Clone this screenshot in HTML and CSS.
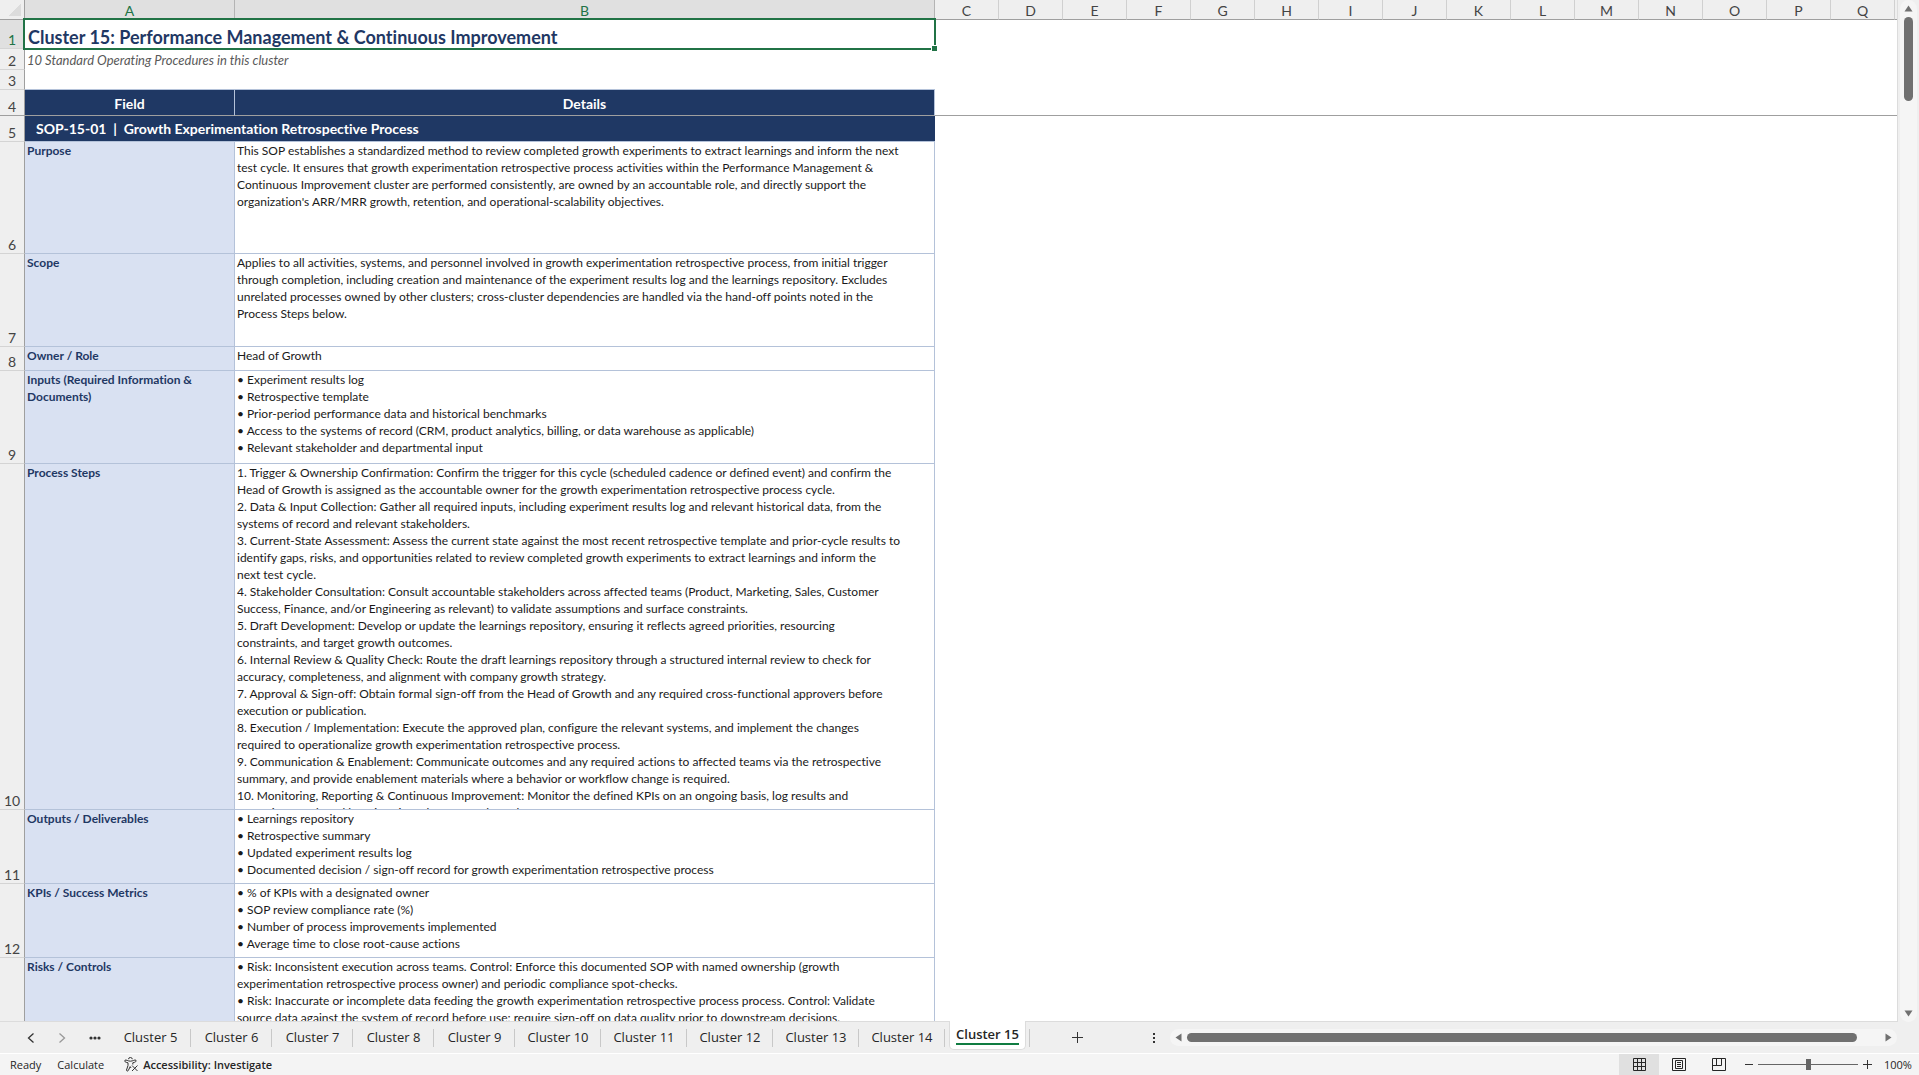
FILE: index.html
```
<!DOCTYPE html>
<html lang="en">
<head>
    <meta charset="utf-8">
    <title>Cluster 15</title>
    <link rel="stylesheet" href="styles.css">
</head>
<body>
    <main class="workspace">
        <div class="sheet">
            <table class="grid">
                <colgroup>
                    <col class="col-num">
                    <col class="col-a">
                    <col class="col-b">
                    <col class="col-std" span="15">
                    <col>
                </colgroup>
                <thead>
                    <tr class="letters">
                        <th class="corner"></th>
                        <th class="active">A</th>
                        <th class="active">B</th>
                        <th>C</th>
                        <th>D</th>
                        <th>E</th>
                        <th>F</th>
                        <th>G</th>
                        <th>H</th>
                        <th>I</th>
                        <th>J</th>
                        <th>K</th>
                        <th>L</th>
                        <th>M</th>
                        <th>N</th>
                        <th>O</th>
                        <th>P</th>
                        <th>Q</th>
                        <th></th>
                    </tr>
                </thead>
                <tbody>
                    <tr class="row-1">
                        <th class="num active">1</th>
                        <td class="title" colspan="2">Cluster 15: Performance Management &amp; Continuous Improvement<span class="handle"></span></td>
                        <td colspan="16"></td>
                    </tr>
                    <tr class="row-2">
                        <th class="num">2</th>
                        <td class="subtitle" colspan="2">10 Standard Operating Procedures in this cluster</td>
                        <td colspan="16"></td>
                    </tr>
                    <tr class="row-3">
                        <th class="num">3</th>
                        <td class="edge" colspan="2"></td>
                        <td colspan="16"></td>
                    </tr>
                    <tr class="row-4 frozen">
                        <th class="num">4</th>
                        <td class="head">Field</td>
                        <td class="head">Details</td>
                        <td colspan="16"></td>
                    </tr>
                    <tr class="row-5">
                        <th class="num">5</th>
                        <td class="section" colspan="2">SOP-15-01&nbsp; |&nbsp; Growth Experimentation Retrospective Process</td>
                        <td colspan="16"></td>
                    </tr>
                    <tr class="row-6">
                        <th class="num">6</th>
                        <td class="field">Purpose</td>
                        <td class="details">This SOP establishes a standardized method to review completed growth experiments to extract learnings and inform the next<br>
                            test cycle. It ensures that growth experimentation retrospective process activities within the Performance Management &amp;<br>
                            Continuous Improvement cluster are performed consistently, are owned by an accountable role, and directly support the<br>
                            organization's ARR/MRR growth, retention, and operational-scalability objectives.</td>
                        <td colspan="16"></td>
                    </tr>
                    <tr class="row-7">
                        <th class="num">7</th>
                        <td class="field">Scope</td>
                        <td class="details">Applies to all activities, systems, and personnel involved in growth experimentation retrospective process, from initial trigger<br>
                            through completion, including creation and maintenance of the experiment results log and the learnings repository. Excludes<br>
                            unrelated processes owned by other clusters; cross-cluster dependencies are handled via the hand-off points noted in the<br>
                            Process Steps below.</td>
                        <td colspan="16"></td>
                    </tr>
                    <tr class="row-8">
                        <th class="num">8</th>
                        <td class="field">Owner / Role</td>
                        <td class="details">Head of Growth</td>
                        <td colspan="16"></td>
                    </tr>
                    <tr class="row-9">
                        <th class="num">9</th>
                        <td class="field">Inputs (Required Information &amp;<br>Documents)</td>
                        <td class="details">• Experiment results log<br>
                            • Retrospective template<br>
                            • Prior-period performance data and historical benchmarks<br>
                            • Access to the systems of record (CRM, product analytics, billing, or data warehouse as applicable)<br>
                            • Relevant stakeholder and departmental input</td>
                        <td colspan="16"></td>
                    </tr>
                    <tr class="row-10">
                        <th class="num">10</th>
                        <td class="field">Process Steps</td>
                        <td class="details"><div class="clip">1. Trigger &amp; Ownership Confirmation: Confirm the trigger for this cycle (scheduled cadence or defined event) and confirm the<br>
                            Head of Growth is assigned as the accountable owner for the growth experimentation retrospective process cycle.<br>
                            2. Data &amp; Input Collection: Gather all required inputs, including experiment results log and relevant historical data, from the<br>
                            systems of record and relevant stakeholders.<br>
                            3. Current-State Assessment: Assess the current state against the most recent retrospective template and prior-cycle results to<br>
                            identify gaps, risks, and opportunities related to review completed growth experiments to extract learnings and inform the<br>
                            next test cycle.<br>
                            4. Stakeholder Consultation: Consult accountable stakeholders across affected teams (Product, Marketing, Sales, Customer<br>
                            Success, Finance, and/or Engineering as relevant) to validate assumptions and surface constraints.<br>
                            5. Draft Development: Develop or update the learnings repository, ensuring it reflects agreed priorities, resourcing<br>
                            constraints, and target growth outcomes.<br>
                            6. Internal Review &amp; Quality Check: Route the draft learnings repository through a structured internal review to check for<br>
                            accuracy, completeness, and alignment with company growth strategy.<br>
                            7. Approval &amp; Sign-off: Obtain formal sign-off from the Head of Growth and any required cross-functional approvers before<br>
                            execution or publication.<br>
                            8. Execution / Implementation: Execute the approved plan, configure the relevant systems, and implement the changes<br>
                            required to operationalize growth experimentation retrospective process.<br>
                            9. Communication &amp; Enablement: Communicate outcomes and any required actions to affected teams via the retrospective<br>
                            summary, and provide enablement materials where a behavior or workflow change is required.<br>
                            10. Monitoring, Reporting &amp; Continuous Improvement: Monitor the defined KPIs on an ongoing basis, log results and<br>
                            exceptions, and feed learnings into the next cycle of the process.</div></td>
                        <td colspan="16"></td>
                    </tr>
                    <tr class="row-11">
                        <th class="num">11</th>
                        <td class="field">Outputs / Deliverables</td>
                        <td class="details">• Learnings repository<br>
                            • Retrospective summary<br>
                            • Updated experiment results log<br>
                            • Documented decision / sign-off record for growth experimentation retrospective process</td>
                        <td colspan="16"></td>
                    </tr>
                    <tr class="row-12">
                        <th class="num">12</th>
                        <td class="field">KPIs / Success Metrics</td>
                        <td class="details">• % of KPIs with a designated owner<br>
                            • SOP review compliance rate (%)<br>
                            • Number of process improvements implemented<br>
                            • Average time to close root-cause actions</td>
                        <td colspan="16"></td>
                    </tr>
                    <tr class="row-13">
                        <th class="num"></th>
                        <td class="field">Risks / Controls</td>
                        <td class="details">• Risk: Inconsistent execution across teams. Control: Enforce this documented SOP with named ownership (growth<br>
                            experimentation retrospective process owner) and periodic compliance spot-checks.<br>
                            • Risk: Inaccurate or incomplete data feeding the growth experimentation retrospective process process. Control: Validate<br>
                            source data against the system of record before use; require sign-off on data quality prior to downstream decisions.</td>
                        <td colspan="16"></td>
                    </tr>
                </tbody>
            </table>
        </div>
        <div class="vscroll">
            <button class="arrow" aria-label="Scroll up"><svg width="9" height="7"><path d="M4.5 0.5L8.5 6.5H0.5Z"/></svg></button>
            <div class="vthumb"></div>
            <button class="arrow" aria-label="Scroll down"><svg width="9" height="7"><path d="M4.5 6.5L8.5 0.5H0.5Z"/></svg></button>
        </div>
    </main>

    <nav class="tabbar">
        <div class="tabnav">
            <button aria-label="Previous sheet"><svg width="8" height="10"><path d="M6.5 0.5L1.5 5L6.5 9.5"/></svg></button>
            <button class="dim" aria-label="Next sheet"><svg width="8" height="10"><path d="M1.5 0.5L6.5 5L1.5 9.5"/></svg></button>
            <button aria-label="More sheets"><svg class="dots" width="12" height="4"><circle cx="2" cy="2" r="1.6"/><circle cx="6" cy="2" r="1.6"/><circle cx="10" cy="2" r="1.6"/></svg></button>
        </div>
        <div class="tabs">
            <button class="tab">Cluster 5</button>
            <button class="tab">Cluster 6</button>
            <button class="tab">Cluster 7</button>
            <button class="tab">Cluster 8</button>
            <button class="tab">Cluster 9</button>
            <button class="tab wide">Cluster 10</button>
            <button class="tab wide">Cluster 11</button>
            <button class="tab wide">Cluster 12</button>
            <button class="tab wide">Cluster 13</button>
            <button class="tab wide">Cluster 14</button>
            <button class="tab current"><span>Cluster 15</span></button>
        </div>
        <button class="add" aria-label="New sheet"><svg width="11" height="11"><path d="M5.5 0V11M0 5.5H11"/></svg></button>
        <div class="splitter"><svg width="2" height="10"><path d="M0 0H2V2H0ZM0 4H2V6H0ZM0 8H2V10H0Z"/></svg></div>
        <div class="hscroll">
            <button class="arrow" aria-label="Scroll left"><svg width="7" height="9"><path d="M0.5 4.5L6.5 0.5V8.5Z"/></svg></button>
            <div class="hthumb"></div>
            <button class="arrow" aria-label="Scroll right"><svg width="7" height="9"><path d="M6.5 4.5L0.5 0.5V8.5Z"/></svg></button>
        </div>
    </nav>

    <footer class="status">
        <span class="ready">Ready</span>
        <button class="calc">Calculate</button>
        <button class="access">
            <svg width="15" height="15" viewBox="0 0 15 15"><path d="M4.5 2.2a1.9 1.7 0 0 1 3.8 0M1 3.2C0.2 4.6 1.2 5.2 4 5.8V8.5L2.5 13C2.6 14.4 4 14.4 4.4 13.3L6.2 9.6L7 11M1 3.2C2 2.4 4 4.2 6.4 4.2S11 2.3 11.9 3.2C12.6 4.6 11.4 5.2 8.8 5.8V7.5M8 8.5L13.5 14M13.5 8.5L8 14"/></svg>
            Accessibility: Investigate
        </button>
        <div class="views">
            <button class="on" aria-label="Normal"><svg width="13" height="13"><path d="M0.5 0.5H12.5V12.5H0.5ZM4.5 0V13M8.5 0V13M0 4.5H13M0 8.5H13"/></svg></button>
            <button aria-label="Page Layout"><svg width="14" height="13"><path d="M0.5 0.5H13.5V12.5H0.5ZM3.5 2.5H10.5V10.5H3.5ZM5 4.5H9M5 6.5H9M5 8.5H9"/></svg></button>
            <button aria-label="Page Break Preview"><svg width="14" height="13"><path d="M0.5 0.5H13.5V12.5H0.5ZM4.5 0V7.5M9.5 0V7.5M0 7.5H9.5"/></svg></button>
        </div>
        <div class="zoom">
            <button aria-label="Zoom out"><svg width="8" height="9"><path d="M0 4.5H8"/></svg></button>
            <input type="range" min="0" max="100" value="50" aria-label="Zoom">
            <button aria-label="Zoom in"><svg width="9" height="9"><path d="M0 4.5H9M4.5 0V9"/></svg></button>
            <button class="percent">100%</button>
        </div>
    </footer>
</body>
</html>
```
FILE: styles.css
```
* {
    box-sizing: border-box;
}
body {
    margin: 0;
    height: 100vh;
    display: flex;
    flex-direction: column;
    overflow: hidden;
    background-color: #efefef;
    font-family: "Open Sans", "Noto Sans", sans-serif;
    color: #262626;
}
button {
    border: 0;
    padding: 0;
    background: none;
    font: inherit;
    color: inherit;
}
svg {
    display: block;
}

/* worksheet */
.workspace {
    flex: 1;
    min-height: 0;
    display: flex;
}
.sheet {
    flex: 1;
    min-width: 0;
    overflow: hidden;
    background-color: white;
    border-right: 1px solid #dcdcdc;
    border-bottom: 1px solid #dcdcdc;
}
.grid {
    width: 100%;
    table-layout: fixed;
    border-collapse: separate;
    border-spacing: 0;
    font-family: Lato, "Open Sans", sans-serif;
    font-size: 12px;
    font-variant-ligatures: none;
    line-height: 17px;
}
.col-num { width: 25px; }
.col-a { width: 210px; }
.col-b { width: 700px; }
.col-std { width: 64px; }

th, td {
    padding: 0;
    white-space: nowrap;
}
.letters { height: 20px; }
.letters th {
    padding-top: 1px;
    background: #efefef;
    border-right: 1px solid #d0d0d0;
    border-bottom: 1px solid #9f9f9f;
    font-size: 14px;
    font-weight: normal;
    color: #444;
}
.letters th:last-child {
    border-right: 0;
}
.letters .active {
    background: #e0e0e0;
    border-right-color: #b4b4b4;
    color: #217346;
}
.letters .corner {
    background: linear-gradient(135deg, #efefef 50%, #dcdcdc 50%) no-repeat 9px 4px / 12px 12px #efefef;
    border-right-color: #9f9f9f;
}
.num {
    background: #efefef;
    border-right: 1px solid #9f9f9f;
    border-bottom: 1px solid #d4d4d4;
    vertical-align: bottom;
    font-size: 14px;
    font-weight: normal;
    color: #444;
}
.num.active {
    background: #e0e0e0;
    color: #217346;
}
.row-1 { height: 29px; }
.row-2 { height: 21px; }
.row-3 { height: 20px; }
.row-4, .row-5 { height: 26px; }
.row-6 { height: 112px; }
.row-7, .row-9 { height: 93px; }
.row-8 { height: 24px; }
.row-10 { height: 346px; }
.row-11, .row-12 { height: 74px; }
.row-13 { height: 112px; }

.title {
    position: relative;
    padding: 5px 3px 0;
    font-size: 18px;
    line-height: 22px;
    font-weight: bold;
    color: #1f3864;
}
/* selection frame */
.title::after {
    content: "";
    position: absolute;
    top: -2px;
    right: -1px;
    bottom: -1px;
    left: -2px;
    border: 2px solid #217346;
}
.handle {
    position: absolute;
    right: -3px;
    bottom: -3px;
    z-index: 1;
    width: 7px;
    height: 7px;
    background: #217346;
    border: 1px solid white;
}
.subtitle {
    padding: 2px 2px 0;
    font-size: 13px;
    font-style: italic;
    color: #595959;
}
.edge {
    border-bottom: 1px solid #b4c2d9;
}
.head {
    padding-top: 2px;
    background: #1f3864;
    border-right: 1px solid #b4c2d9;
    text-align: center;
    font-size: 14px;
    font-weight: bold;
    color: white;
}
.frozen th, .frozen td {
    border-bottom: 1px solid #9f9f9f;
}
.section {
    padding-left: 11px;
    background: #1f3864;
    border-bottom: 1px solid #b4c2d9;
    font-size: 14px;
    font-weight: bold;
    color: white;
}
.field, .details {
    padding: 0 2px;
    vertical-align: top;
    border-right: 1px solid #b4c2d9;
    border-bottom: 1px solid #b4c2d9;
}
.field {
    background: #d9e1f2;
    font-weight: bold;
    color: #1f3864;
}
.details {
    color: #1a1a1a;
}
.clip {
    height: 345px;
    overflow: hidden;
}

/* scrollbars */
.vscroll {
    width: 17px;
    margin: 0 2px;
    padding: 5px 0;
    display: flex;
    flex-direction: column;
    align-items: center;
    background: #f5f5f5;
    border-radius: 9px;
}
.vthumb {
    width: 9px;
    height: 84px;
    margin: 5px 0 auto;
    background: #707070;
    border-radius: 5px;
}
.arrow {
    fill: #707070;
}
.hscroll {
    flex: 1;
    height: 17px;
    margin: 0 22px 0 15px;
    padding: 0 5px;
    display: flex;
    align-items: center;
    background: #f5f5f5;
    border-radius: 9px;
}
.hthumb {
    flex: 1;
    height: 9px;
    margin: 0 28px 0 5px;
    background: #707070;
    border-radius: 5px;
}

/* sheet tabs */
.tabbar {
    height: 32px;
    display: flex;
    align-items: center;
    border-bottom: 1px solid white;
    font-size: 13px;
}
.tabnav {
    width: 110px;
    padding-left: 27px;
    display: flex;
    align-items: center;
    gap: 23px;
    fill: none;
    stroke: #333;
    stroke-width: 1.3;
}
.tabnav .dim {
    stroke: #999;
}
.dots {
    fill: #333;
    stroke: none;
}
.tabs {
    display: flex;
    align-self: stretch;
}
.tab {
    position: relative;
    width: 81px;
    height: 31px;
    padding-bottom: 2px;
}
.tab.wide {
    width: 86px;
}
.tab::after {
    content: "";
    position: absolute;
    top: 7px;
    right: 0;
    width: 1px;
    height: 18px;
    background: #c8c8c8;
}
.tab.current {
    width: 77px;
    height: 29px;
    margin: -1px 0 0 4px;
    background: white;
    border: 1px solid #dcdcdc;
    border-top: 0;
    border-radius: 0 0 5px 5px;
    font-weight: 600;
}
.tab.current::after {
    top: 8px;
    right: -5px;
}
.current span {
    border-bottom: 2px solid #107c41;
}
.add {
    margin-left: 46px;
    stroke: #333;
}
.splitter {
    margin-left: 70px;
    fill: #333;
}

/* status bar */
.status {
    height: 21px;
    display: flex;
    align-items: center;
    background: #f4f4f4;
    font-size: 11px;
    line-height: 16px;
}
.ready {
    margin-left: 10px;
}
.calc {
    margin-left: 16px;
}
.access {
    display: flex;
    gap: 4px;
    margin-left: 20px;
    font-weight: 600;
}
.access svg {
    fill: none;
    stroke: #333;
}
.views {
    display: flex;
    align-self: stretch;
    margin-left: auto;
}
.views button {
    width: 40px;
    display: flex;
    align-items: center;
    justify-content: center;
    fill: none;
    stroke: #262626;
}
.views .on {
    background: #e0e0e0;
}
.zoom {
    width: 180px;
    padding-left: 6px;
    display: flex;
    align-items: center;
    gap: 5px;
    stroke: #333;
}
.zoom input {
    appearance: none;
    width: 100px;
    height: 11px;
    margin: 0;
    background: linear-gradient(#666, #666) no-repeat center / 100% 1px;
}
.zoom input::-webkit-slider-thumb {
    appearance: none;
    width: 5px;
    height: 11px;
    background: #666;
}
.percent {
    margin-left: 7px;
}
```
